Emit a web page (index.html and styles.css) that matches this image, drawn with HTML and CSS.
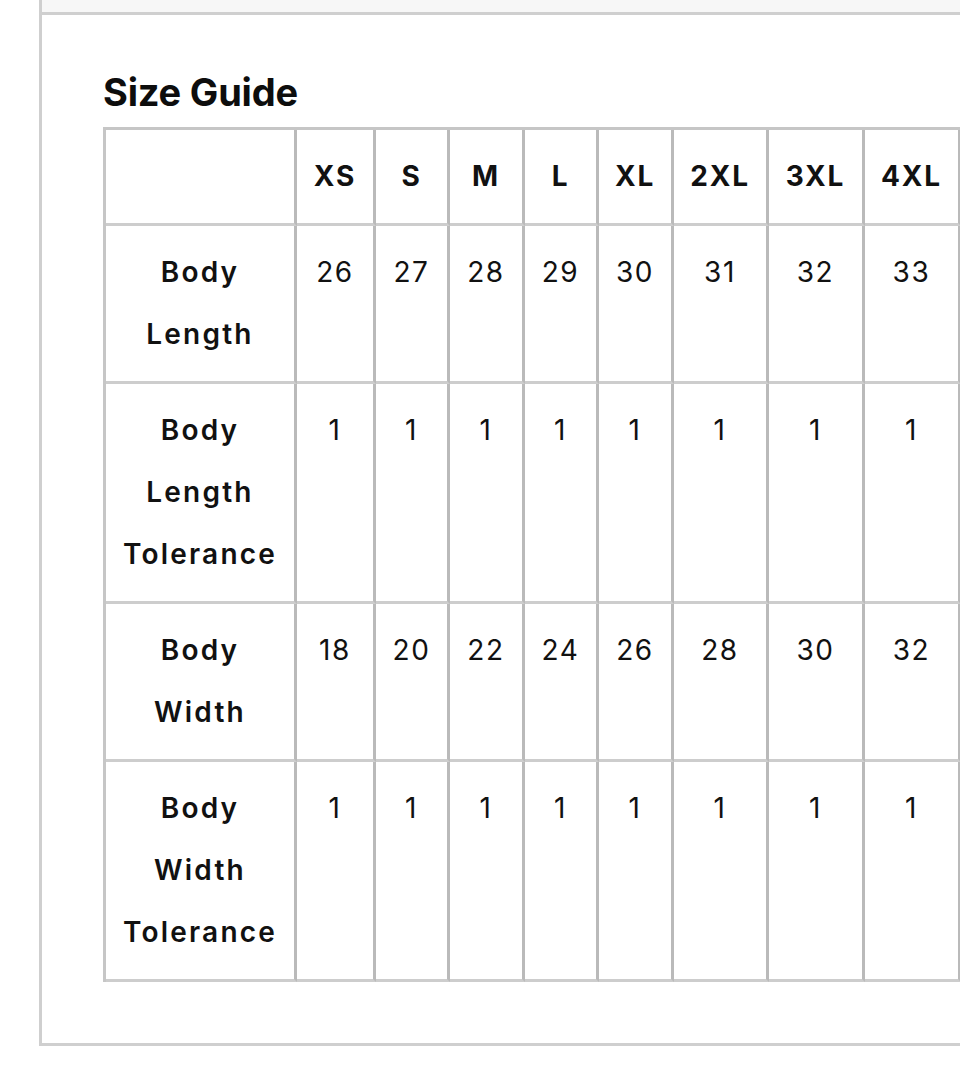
FILE: index.html
```html
<!DOCTYPE html>
<html lang="en">
<head>
<meta charset="utf-8">
<title>Size Guide</title>
<link rel="stylesheet" href="styles.css">
</head>
<body>
<div class="panel">
  <div class="panel-strip"></div>
  <div class="panel-body">
    <h2 class="title">Size Guide</h2>
    <div class="grid" role="table">
      <div class="cell head"></div>
      <div class="cell head">XS</div>
      <div class="cell head">S</div>
      <div class="cell head">M</div>
      <div class="cell head">L</div>
      <div class="cell head">XL</div>
      <div class="cell head">2XL</div>
      <div class="cell head">3XL</div>
      <div class="cell head">4XL</div>

      <div class="cell label">Body<br>Length</div>
      <div class="cell">26</div><div class="cell">27</div><div class="cell">28</div><div class="cell">29</div><div class="cell">30</div><div class="cell">31</div><div class="cell">32</div><div class="cell">33</div>

      <div class="cell label">Body<br>Length<br>Tolerance</div>
      <div class="cell">1</div><div class="cell">1</div><div class="cell">1</div><div class="cell">1</div><div class="cell">1</div><div class="cell">1</div><div class="cell">1</div><div class="cell">1</div>

      <div class="cell label">Body<br>Width</div>
      <div class="cell">18</div><div class="cell">20</div><div class="cell">22</div><div class="cell">24</div><div class="cell">26</div><div class="cell">28</div><div class="cell">30</div><div class="cell">32</div>

      <div class="cell label">Body<br>Width<br>Tolerance</div>
      <div class="cell">1</div><div class="cell">1</div><div class="cell">1</div><div class="cell">1</div><div class="cell">1</div><div class="cell">1</div><div class="cell">1</div><div class="cell">1</div>
    </div>
  </div>
</div>
</body>
</html>
```
FILE: styles.css
```css
html, body {
  margin: 0;
  padding: 0;
  overflow: hidden;
  background: #ffffff;
}

body {
  font-family: Inter, "Liberation Sans", sans-serif;
  color: #111111;
  width: 960px;
  height: 1085px;
}

.panel {
  margin-left: 39px;
  width: 1200px;
  border-left: 3px solid #cfcfcf;
  border-bottom: 3px solid #cfcfcf;
}

.panel-strip {
  height: 12px;
  background: #f7f7f7;
  border-bottom: 3px solid #cfcfcf;
}

.panel-body {
  padding: 57px 0 61px 61px;
}

.title {
  margin: 0 0 15px 0;
  font-size: 38px;
  line-height: 40px;
  font-weight: 700;
  letter-spacing: -0.2px;
  color: #0d0d0d;
}

.grid {
  display: grid;
  grid-template-columns: 191px 79px 74px 75px 74px 75px 95px 96px 96px;
  width: max-content;
  border-left: 3px solid #c6c6c6;
  border-top: 3px solid #c6c6c6;
}

.cell {
  box-sizing: border-box;
  border-right: 3px solid #bababa;
  border-bottom: 3px solid #cdcdcd;
  padding: 15px 0 16px 0;
  text-align: center;
  font-size: 28px;
  line-height: 62px;
  font-weight: 400;
  letter-spacing: 1.6px;
}

.head {
  font-weight: 700;
  letter-spacing: 1.8px;
}

.label {
  font-weight: 600;
  letter-spacing: 2.2px;
}
```
